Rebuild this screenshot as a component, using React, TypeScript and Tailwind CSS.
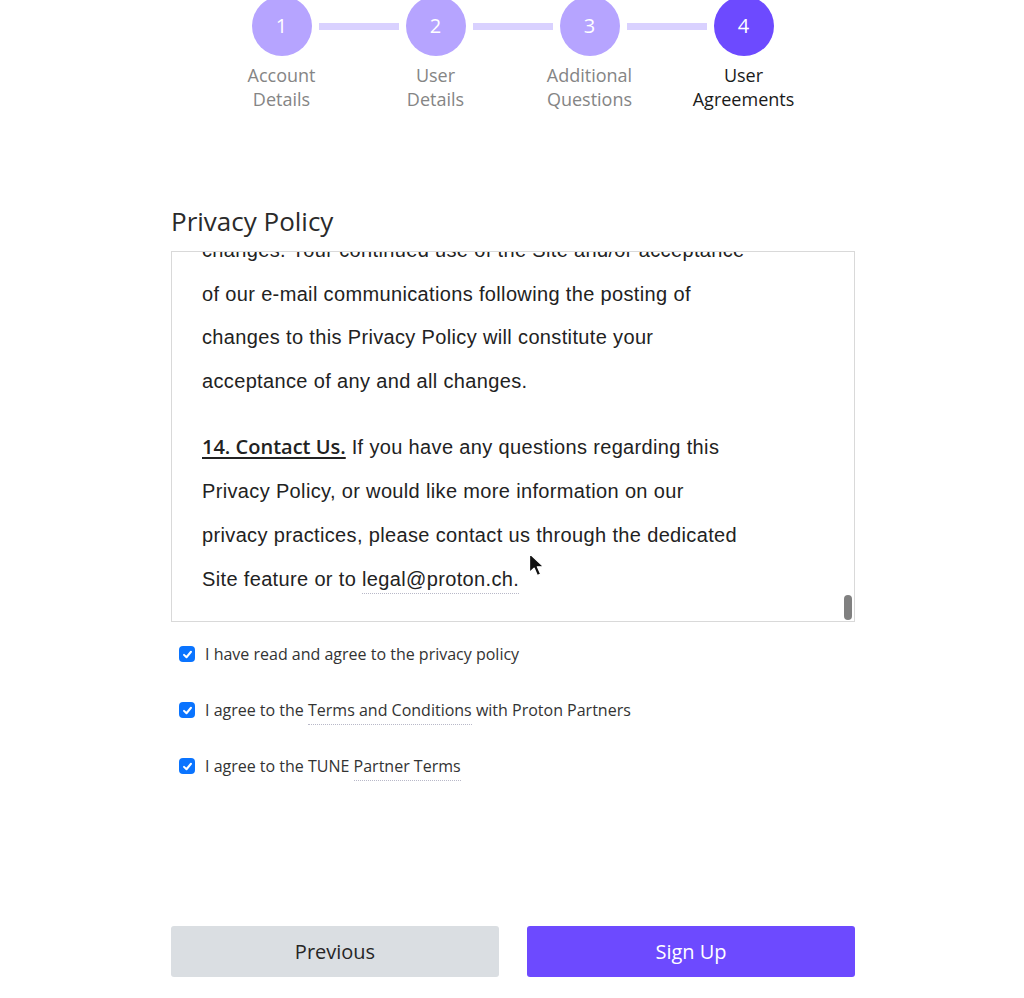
import React from 'react';

const steps = [
  { n: 1, top: 'Account', bottom: 'Details' },
  { n: 2, top: 'User', bottom: 'Details' },
  { n: 3, top: 'Additional', bottom: 'Questions' },
  { n: 4, top: 'User', bottom: 'Agreements' },
];

const Check = () => (
  <span className="flex h-4 w-4 shrink-0 items-center justify-center rounded-[4px] bg-[#0a74ff]">
    <svg width="11" height="11" viewBox="0 0 12 12" fill="none">
      <path d="M2.2 6.4 4.9 9 9.8 3" stroke="white" strokeWidth="2.2" strokeLinecap="round" strokeLinejoin="round" />
    </svg>
  </span>
);

const Dotted = ({ children }: { children: React.ReactNode }) => (
  <span className="border-b border-dotted border-[#b8b8c8] pb-[3px]">{children}</span>
);

export default function App() {
  const active = 4;

  return (
    <div className="min-h-[998px] bg-white font-['Open_Sans',sans-serif] text-[#262626]">
      {/* Stepper */}
      <div className="-mt-1 flex flex-col items-center pl-px">
        <div className="flex items-center">
          {steps.map((s, i) => (
            <React.Fragment key={s.n}>
              {i > 0 && <div className="mx-[7px] h-[7px] w-[80px] bg-[#d9d1ff]" />}
              <div
                className={`flex h-[60px] w-[60px] items-center justify-center rounded-full text-[20px] text-white ${
                  s.n === active ? 'bg-[#6d4aff]' : 'bg-[#b6a4ff]'
                }`}
              >
                {s.n}
              </div>
            </React.Fragment>
          ))}
        </div>
        <div className="mt-[7px] flex">
          {steps.map((s) => (
            <div
              key={s.n}
              className={`w-[154px] text-center text-[18px] leading-6 ${
                s.n === active ? 'text-[#1a1a1a]' : 'text-[#858585]'
              }`}
            >
              <div>{s.top}</div>
              <div>{s.bottom}</div>
            </div>
          ))}
        </div>
      </div>

      <div className="mx-auto w-[684px] translate-x-px">
        <h2 className="mt-[94px] text-[26px] leading-8 text-[#2a2a2a]">Privacy Policy</h2>

        {/* Policy box */}
        <div className="relative mt-[14px] h-[371px] overflow-hidden border border-[#d9d9d9] pl-[30px]">
          <div className="-mt-[23px] w-[560px] font-['Liberation_Sans',Arial,sans-serif] text-[20px] leading-[43.6px] tracking-[0.35px] text-[#222]">
            <p>
              changes. Your continued use of the Site and/or acceptance
              <br />
              of our e-mail communications following the posting of
              <br />
              changes to this Privacy Policy will constitute your
              <br />
              acceptance of any and all changes.
            </p>
            <p className="mt-[22px] leading-[44px]">
              <span className="font-['Open_Sans',sans-serif] text-[20px] font-semibold tracking-normal underline underline-offset-[3px]">
                14. Contact Us.
              </span>{' '}
              If you have any questions regarding this
              <br />
              Privacy Policy, or would like more information on our
              <br />
              privacy practices, please contact us through the dedicated
              <br />
              Site feature or to <Dotted>legal@proton.ch.</Dotted>
            </p>
          </div>
          <div className="absolute bottom-[1px] right-[2px] h-[25px] w-[8px] rounded-full bg-[#808080]" />
          {/* mouse pointer */}
          <svg className="absolute left-[356px] top-[300px]" width="18" height="26" viewBox="0 0 18 26">
            <path
              d="M1.5 1.5v19l4.6-4.4 3.2 7.4 3.3-1.4-3.2-7.3h6.3z"
              fill="#111"
              stroke="white"
              strokeWidth="1.3"
              strokeLinejoin="round"
            />
          </svg>
        </div>

        {/* Agreements */}
        <div className="mt-5 flex flex-col gap-8 text-[16px] leading-6 text-[#333]">
          <label className="flex items-center gap-[10px] pl-2">
            <Check />
            <span>I have read and agree to the privacy policy</span>
          </label>
          <label className="flex items-center gap-[10px] pl-2">
            <Check />
            <span>
              I agree to the <Dotted>Terms and Conditions</Dotted> with Proton Partners
            </span>
          </label>
          <label className="flex items-center gap-[10px] pl-2">
            <Check />
            <span>
              I agree to the TUNE <Dotted>Partner Terms</Dotted>
            </span>
          </label>
        </div>

        {/* Actions */}
        <div className="mt-[148px] grid grid-cols-2 gap-7">
          <button className="h-[51px] rounded-[3px] bg-[#dadee2] text-[20px] text-[#262626]">Previous</button>
          <button className="h-[51px] rounded-[3px] bg-[#6d4aff] text-[20px] text-white">Sign Up</button>
        </div>
      </div>
    </div>
  );
}
